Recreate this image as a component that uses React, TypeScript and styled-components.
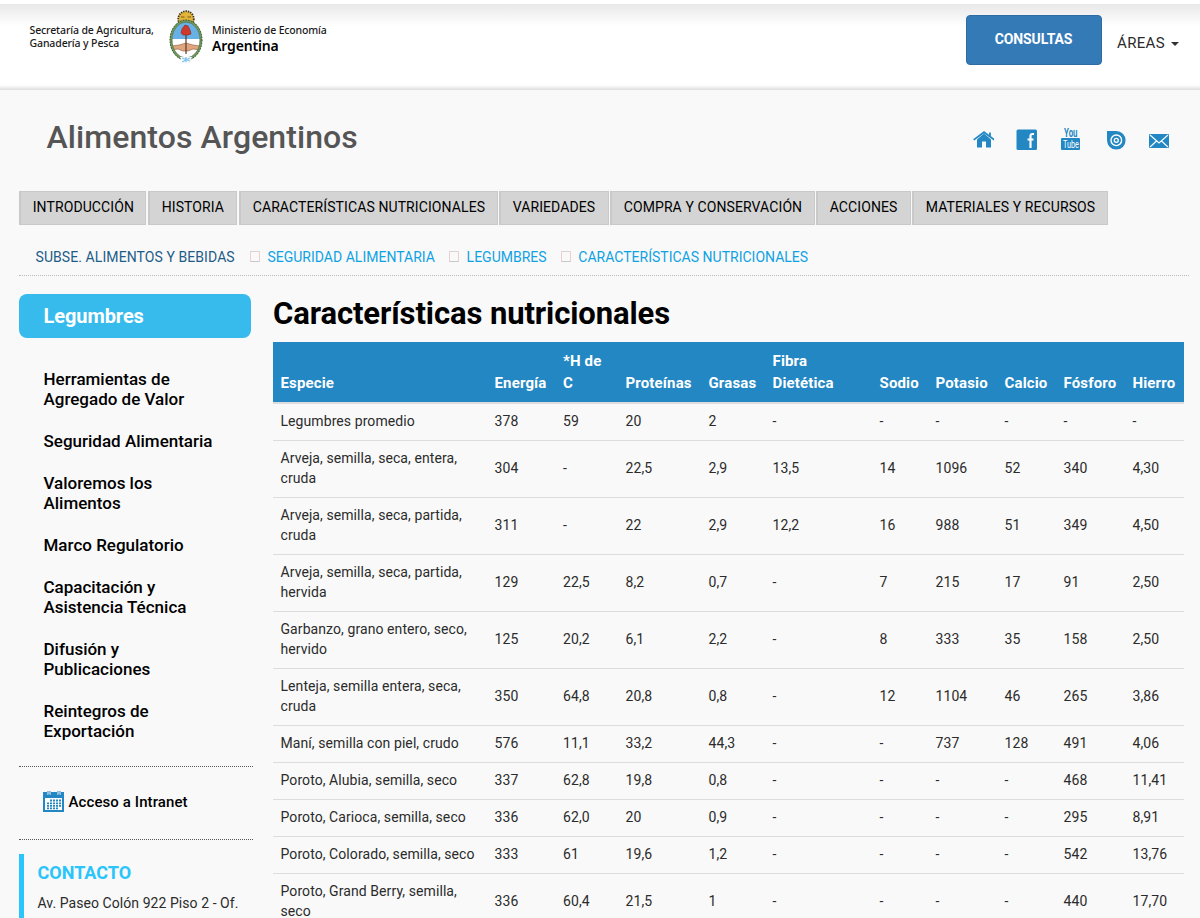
import React from 'react';
import styled, { createGlobalStyle } from 'styled-components';

const GlobalStyle = createGlobalStyle`
  * { box-sizing: border-box; }
  body {
    margin: 0;
    background: #f9f9f9;
    color: #2b2b2b;
    font: 400 14px/20px Roboto, sans-serif;
  }
  a { color: inherit; text-decoration: none; }
  ul { list-style: none; margin: 0; padding: 0; }
`;

const Page = styled.div`
  height: 918px;
  overflow: hidden;
`;

const Header = styled.header`
  height: 90px;
  border-top: 4px solid #fff;
  padding: 0 21px 0 29.5px;
  display: flex;
  justify-content: space-between;
  align-items: flex-start;
  background:
    linear-gradient(to top, #dedede, #fff 5px, transparent 5px),
    linear-gradient(to bottom, #e8e8e8, #fff 22px);
`;

const Brand = styled.a`
  display: flex;
  align-items: flex-start;
  padding-top: 6px;
  font-family: 'Noto Sans', sans-serif;
  color: #1a1a1a;
`;

const Office = styled.span`
  width: 138.5px;
  padding-top: 14px;
  font-size: 10.5px;
  line-height: 13px;
  font-weight: 500;
  letter-spacing: -0.12px;
  white-space: nowrap;
`;

const Ministry = styled.span`
  padding: 14px 0 0 8px;
  display: flex;
  flex-direction: column;
  font-size: 10.5px;
  line-height: 13px;
  font-weight: 500;
  letter-spacing: -0.15px;
`;

const Country = styled.strong`
  font-size: 14px;
  line-height: 17px;
  font-weight: 600;
  color: #000;
`;

const HeaderActions = styled.div`
  display: flex;
  align-items: flex-start;
  padding-top: 11px;
  gap: 15px;
`;

const ConsultButton = styled.button`
  width: 136px;
  height: 50px;
  padding: 0 1px 2px 0;
  border: 1px solid #2e6da4;
  border-radius: 4px;
  background: #337ab7;
  color: #fff;
  font: 700 14px/20px Roboto, sans-serif;
  letter-spacing: -0.1px;
`;

const AreasLink = styled.a`
  display: flex;
  align-items: center;
  gap: 6px;
  padding-top: 18px;
  font-size: 15px;
  letter-spacing: 0.35px;
`;

const Caret = styled.span`
  border: 4px solid transparent;
  border-top-color: #333;
  border-bottom: 0;
  margin-top: 2px;
`;

const TitleRow = styled.div`
  display: flex;
  justify-content: space-between;
  align-items: flex-start;
  height: 101px;
  padding: 29px 30px 0 46.5px;
`;

const SiteTitle = styled.h1`
  margin: 0;
  font-size: 32px;
  line-height: 36px;
  font-weight: 500;
  color: #555;
  letter-spacing: 0.08px;
`;

const SocialLinks = styled.div`
  display: flex;
  align-items: center;
  gap: 22px;
  height: 42px;
  svg { display: block; width: 22px; height: 24px; }
`;

const Tabs = styled.nav`
  display: flex;
  gap: 1px;
  padding-left: 19px;
`;

const Tab = styled.a<{ $width: number; $gap?: number }>`
  width: ${({ $width }) => $width}px;
  height: 34px;
  margin-right: ${({ $gap = 0 }) => $gap}px;
  border: 1px solid #c9c9c9;
  border-left-width: 2px;
  background: #d4d4d4;
  color: #000;
  font-weight: 400;
  letter-spacing: 0.1px;
  line-height: 31px;
  padding-left: 11.7px;
  white-space: nowrap;
`;

const Breadcrumb = styled.nav`
  display: flex;
  align-items: center;
  margin: 22px 11px 0 19px;
  padding: 0 0 8px 16.5px;
  border-bottom: 1px dotted #bbb;
  height: 29px;
`;

const Crumb = styled.a<{ $root?: boolean }>`
  color: ${({ $root }) => ($root ? '#1d5d87' : '#0fa2e3')};
  letter-spacing: ${({ $root }) => ($root ? '0.08px' : '0.01px')};
  margin-right: ${({ $root }) => ($root ? '1px' : '0')};
  white-space: nowrap;
`;

const CrumbMark = styled.span`
  width: 10px;
  height: 11px;
  border: 1px solid #f0d0cc;
  border-bottom-color: #c8c8c8;
  border-top-color: #d6d6d6;
  margin: 0 7.7px 1px 14px;
`;

const Columns = styled.div`
  display: grid;
  grid-template-columns: 234px 911px;
  column-gap: 20px;
  padding: 18px 0 0 19px;
`;

const SectionBadge = styled.h2`
  margin: 0 2px 20px 0;
  height: 44px;
  padding-left: 24.5px;
  border-radius: 8px;
  background: #37bbed;
  color: #fff;
  font-size: 20px;
  font-weight: 700;
  letter-spacing: -0.08px;
  line-height: 44px;
`;

const SideMenu = styled.ul`
  display: flex;
  flex-direction: column;
  gap: 22px;
  padding: 11px 20px 25px 24.5px;
  color: #000;
  font-size: 17px;
  font-weight: 500;
`;

const Intranet = styled.div`
  display: flex;
  align-items: center;
  gap: 5px;
  height: 74px;
  padding: 0 0 3px 23.5px;
  border: 1px dotted #555;
  border-width: 1px 0;
  color: #000;
  font-size: 15px;
  font-weight: 500;
  letter-spacing: 0.1px;
`;

const Contact = styled.address`
  margin-top: 14px;
  height: 64px;
  padding: 9px 0 0 13.5px;
  border-left: 5px solid #29c5fb;
  font-style: normal;
  white-space: nowrap;
  p { margin: 10px 0 0; letter-spacing: 0.06px; }
`;

const ContactTitle = styled.h3`
  margin: 0;
  color: #29c5fb;
  font-size: 18px;
  font-weight: 700;
`;

const ArticleTitle = styled.h2`
  margin: 0;
  height: 48px;
  padding-top: 1px;
  color: #000;
  font-size: 31px;
  font-weight: 700;
  line-height: 38px;
  letter-spacing: -0.1px;
`;

const NutritionTable = styled.table`
  width: 911px;
  table-layout: fixed;
  border-collapse: collapse;
  letter-spacing: 0.08px;
  th, td { padding: 8px 7.5px; text-align: left; }
  th {
    background: #2387c3;
    color: #fff;
    border-bottom: 2px solid #ddd;
    font-size: 15px;
    font-weight: 700;
    line-height: 22px;
    vertical-align: bottom;
    letter-spacing: 0.15px;
  }
  td {
    padding-top: 7px;
    padding-bottom: 9px;
    border-top: 1px solid #ddd;
    vertical-align: middle;
    line-height: 20px;
    white-space: pre-line;
  }
`;

const columns: [React.ReactNode, number][] = [
  ['Especie', 214],
  ['Energía', 68.5],
  ['*H de C', 62.5],
  ['Proteínas', 83],
  ['Grasas', 64],
  [<>Fibra<br />Dietética</>, 107],
  ['Sodio', 56],
  ['Potasio', 69],
  ['Calcio', 59],
  ['Fósforo', 69],
  ['Hierro', 59],
];

const rows = [
  'Legumbres promedio|378|59|20|2|-|-|-|-|-|-',
  'Arveja, semilla, seca, entera,\ncruda|304|-|22,5|2,9|13,5|14|1096|52|340|4,30',
  'Arveja, semilla, seca, partida,\ncruda|311|-|22|2,9|12,2|16|988|51|349|4,50',
  'Arveja, semilla, seca, partida,\nhervida|129|22,5|8,2|0,7|-|7|215|17|91|2,50',
  'Garbanzo, grano entero, seco,\nhervido|125|20,2|6,1|2,2|-|8|333|35|158|2,50',
  'Lenteja, semilla entera, seca,\ncruda|350|64,8|20,8|0,8|-|12|1104|46|265|3,86',
  'Maní, semilla con piel, crudo|576|11,1|33,2|44,3|-|-|737|128|491|4,06',
  'Poroto, Alubia, semilla, seco|337|62,8|19,8|0,8|-|-|-|-|468|11,41',
  'Poroto, Carioca, semilla, seco|336|62,0|20|0,9|-|-|-|-|295|8,91',
  'Poroto, Colorado, semilla, seco|333|61|19,6|1,2|-|-|-|-|542|13,76',
  'Poroto, Grand Berry, semilla,\nseco|336|60,4|21,5|1|-|-|-|-|440|17,70',
].map((line) => line.split('|'));

const tabs: [string, number, number?][] = [
  ['INTRODUCCIÓN', 127, 1],
  ['HISTORIA', 89, 1],
  ['CARACTERÍSTICAS NUTRICIONALES', 259],
  ['VARIEDADES', 110],
  ['COMPRA Y CONSERVACIÓN', 205],
  ['ACCIONES', 95],
  ['MATERIALES Y RECURSOS', 196],
];

const menu: React.ReactNode[] = [
  <>Herramientas de<br />Agregado de Valor</>,
  'Seguridad Alimentaria',
  <>Valoremos los<br />Alimentos</>,
  'Marco Regulatorio',
  <>Capacitación y<br />Asistencia Técnica</>,
  <>Difusión y<br />Publicaciones</>,
  <>Reintegros de<br />Exportación</>,
];

const blue = '#2387c3';

const CoatOfArms = () => (
  <svg width="36" height="54" viewBox="0 0 36 54">
    <circle cx="18" cy="9" r="7.8" fill="#e2b53a" stroke="#40351c" strokeWidth="1.8" strokeDasharray="1.4 1" />
    <path d="M13 7h3.5M19.5 7H23M15.5 11h5" stroke="#7c5b18" strokeWidth="1.2" />
    <clipPath id="shield"><ellipse cx="18" cy="30" rx="14" ry="18.5" /></clipPath>
    <g clipPath="url(#shield)">
      <path d="M2 10h32v19H2z" fill="#67b1e6" />
      <path d="M2 29h32v22H2z" fill="#fff" />
      <path d="M3 36l8-1 7-2 7 2 8 1v4l-8-1-5 2h-5l-5-2-7 1z" fill="#dfa57c" stroke="#8d5c3f" strokeWidth=".6" />
      <path d="M18 23v21" stroke="#5b3a28" strokeWidth="1.2" />
      <path d="M17 15l3 1 2 4 1 4-3 1-5 0-2-2 1-4z" fill="#cf382c" stroke="#842822" strokeWidth=".6" />
    </g>
    <ellipse cx="18" cy="30" rx="15" ry="19" fill="none" stroke="#6f9a5c" strokeWidth="2.4" />
    <ellipse cx="18" cy="30" rx="16" ry="20" fill="none" stroke="#384b31" strokeWidth="1" strokeDasharray="1.5 1.3" />
    <ellipse cx="18" cy="30" rx="14" ry="18" fill="none" stroke="#4d6543" strokeWidth=".6" />
    <path d="M12 47h12l-2 5-4 2-4-2z" fill="#f3f9fd" />
    <path d="M14 48l8 3M22 48l-8 4M18 47v5" stroke="#82c3eb" strokeWidth="1.3" />
  </svg>
);

const HomeIcon = () => (
  <svg viewBox="-1 0.5 22 24">
    <path d="M4 12l7-6 7 6v8h-5v-6H9v6H4z" fill={blue} />
    <path d="M.7 12.4L11 4.7l10.3 7.7M17 5v4" fill="none" stroke={blue} strokeWidth="1.8" />
  </svg>
);

const FacebookIcon = () => (
  <svg viewBox="0.5 0.5 22 24">
    <rect x="1" y="2" width="20.5" height="20.5" rx="1.5" fill={blue} />
    <path d="M18.5 6.5H17c-1.5 0-2 .8-2 2v12M12 12h6" fill="none" stroke="#fff" strokeWidth="2.2" />
  </svg>
);

const YoutubeIcon = () => (
  <svg viewBox="0 1 22 24" overflow="visible">
    <rect x="1" y="11" width="19" height="12" rx="1" fill={blue} />
    <g fontFamily="Roboto, sans-serif" fontWeight="700" fontSize="11">
      <text x="4" y="9.7" fontSize="12" fill={blue} textLength="13.5" lengthAdjust="spacingAndGlyphs">You</text>
      <text x="3" y="21" fill="#fff" fontWeight="400" textLength="16" lengthAdjust="spacingAndGlyphs">Tube</text>
    </g>
  </svg>
);

const TargetIcon = () => (
  <svg viewBox="-1 1 22 24">
    <path d="M2 4h9.3a9.3 9.3 0 1 1-9.3 9.3z" fill={blue} />
    <circle cx="11.3" cy="13.3" r="5.3" fill="none" stroke="#fff" strokeWidth="1.4" />
    <circle cx="11.3" cy="13.3" r="2" fill="none" stroke="#fff" strokeWidth="1.3" />
  </svg>
);

const MailIcon = () => (
  <svg viewBox="0 1 22 24">
    <rect x="1" y="7" width="20" height="14" rx="1" fill={blue} />
    <path d="M2 8l9 8 9-8M2 20l6.5-6M20 20l-6.5-6" fill="none" stroke="#fff" strokeWidth="1.1" />
  </svg>
);

const CalendarIcon = () => (
  <svg width="21" height="22" viewBox="0 1 21 22">
    <rect y="2" width="21" height="20" fill={blue} />
    <path d="M2 8h17v12H2z" fill="#fff" />
    <path d="M4 0h4v5H4zM14 0h4v5h-4z" fill="#f9f9f9" />
    <path d="M5 1v4h2V1M15 1v4h2V1" fill="none" stroke={blue} />
    <path d="M7 10.5h11M4 13.3h14M4 15.8h14M4 18.3h11" stroke={blue} strokeWidth="1.8" strokeDasharray="2 1" />
  </svg>
);

export default function App() {
  return (
    <Page>
      <GlobalStyle />
      <Header>
        <Brand href="#">
          <Office>Secretaría de Agricultura,<br />Ganadería y Pesca</Office>
          <CoatOfArms />
          <Ministry>Ministerio de Economía<Country>Argentina</Country></Ministry>
        </Brand>
        <HeaderActions>
          <ConsultButton>CONSULTAS</ConsultButton>
          <AreasLink href="#">ÁREAS<Caret /></AreasLink>
        </HeaderActions>
      </Header>
      <TitleRow>
        <SiteTitle>Alimentos Argentinos</SiteTitle>
        <SocialLinks>
          <HomeIcon /><FacebookIcon /><YoutubeIcon /><TargetIcon /><MailIcon />
        </SocialLinks>
      </TitleRow>
      <Tabs>
        {tabs.map(([label, width, gap]) => (
          <Tab key={label} href="#" $width={width} $gap={gap}>{label}</Tab>
        ))}
      </Tabs>
      <Breadcrumb>
        <Crumb href="#" $root>SUBSE. ALIMENTOS Y BEBIDAS</Crumb>
        <CrumbMark />
        <Crumb href="#">SEGURIDAD ALIMENTARIA</Crumb>
        <CrumbMark />
        <Crumb href="#">LEGUMBRES</Crumb>
        <CrumbMark />
        <Crumb href="#">CARACTERÍSTICAS NUTRICIONALES</Crumb>
      </Breadcrumb>
      <Columns>
        <aside>
          <SectionBadge>Legumbres</SectionBadge>
          <SideMenu>
            {menu.map((item, i) => <li key={i}><a href="#">{item}</a></li>)}
          </SideMenu>
          <Intranet><CalendarIcon /><a href="#">Acceso a Intranet</a></Intranet>
          <Contact>
            <ContactTitle>CONTACTO</ContactTitle>
            <p>Av. Paseo Colón 922 Piso 2 - Of.</p>
          </Contact>
        </aside>
        <main>
          <ArticleTitle>Características nutricionales</ArticleTitle>
          <NutritionTable>
            <colgroup>{columns.map(([, w], i) => <col key={i} width={w} />)}</colgroup>
            <thead><tr>{columns.map(([label], i) => <th key={i}>{label}</th>)}</tr></thead>
            <tbody>
              {rows.map((cells) => (
                <tr key={cells[0]}>{cells.map((cell, i) => <td key={i}>{cell}</td>)}</tr>
              ))}
            </tbody>
          </NutritionTable>
        </main>
      </Columns>
    </Page>
  );
}
